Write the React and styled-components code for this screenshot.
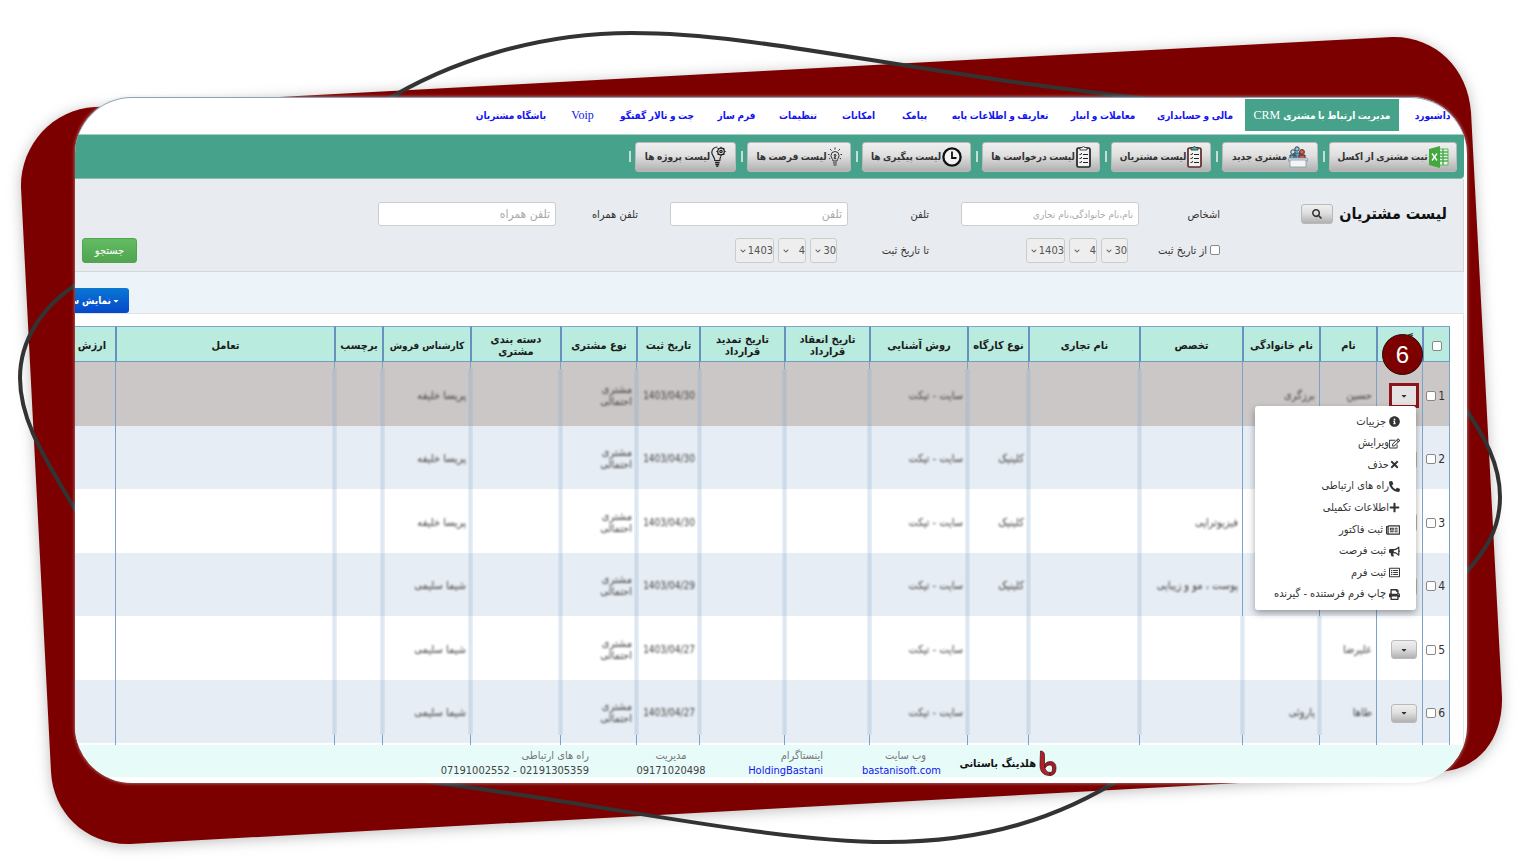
import React from "react";
import styled, { createGlobalStyle, css } from "styled-components";
import {
  FaInfoCircle,
  FaRegEdit,
  FaTimes,
  FaPhoneAlt,
  FaPlus,
  FaRegNewspaper,
  FaBullhorn,
  FaRegListAlt,
  FaPrint,
  FaSearch,
  FaCaretDown,
  FaChevronDown,
} from "react-icons/fa";

const ui = `"DejaVu Sans Condensed", "DejaVu Sans", sans-serif`;
const naskh = `"Liberation Serif", "DejaVu Sans Condensed", "DejaVu Sans", serif`;

const GlobalStyle = createGlobalStyle`
  *, *::before, *::after { box-sizing: border-box; }
  body { margin: 0; background: #fff; font-family: ${ui}; font-size: 11px; color: #333; }
  button, input, select { font: inherit; margin: 0; }
  a { text-decoration: none; }
`;

/* ---------- page and backdrop ---------- */

const Stage = styled.div`
  position: relative;
  min-height: 100vh;
  padding: 97px 69px 81px 75px;
  overflow: hidden;
`;

const Backdrop = styled.svg`
  position: absolute;
  inset: 0;
  width: 100%;
  height: 100%;
`;

const RedShape = styled.path`
  fill: #7d0000;
  filter: drop-shadow(0 2px 7px rgba(0, 0, 0, 0.26));
`;

const Swoosh = styled.path`
  fill: none;
  stroke: #333;
  stroke-width: 4;
`;

const Panel = styled.main`
  position: relative;
  direction: rtl;
  background: #fff;
  border-radius: 57px;
  overflow: hidden;
  box-shadow: 0 0 3px 1px rgba(228, 220, 220, 0.4), inset 0 1px 0 #8aa2bb;
`;

/* ---------- top navigation ---------- */

const Nav = styled.nav`
  display: flex;
  gap: 4px;
  height: 37px;
  padding: 2px 5px 3px 0;
`;

const NavLink = styled.a`
  display: flex;
  align-items: center;
  justify-content: center;
  flex: 0 0 auto;
  width: ${(p) => p.$width + 24}px;
  white-space: nowrap;
  font-family: ${naskh};
  font-size: ${(p) => (p.$latin ? 12 : 10)}px;
  font-weight: ${(p) => (p.$latin ? 400 : 700)};
  color: ${(p) => (p.$active ? "#fff" : "#1414f0")};
  background: ${(p) => (p.$active ? "#46a28b" : "transparent")};
`;

const Latin = styled.span`
  font-size: 12px;
  font-weight: 400;
`;

/* ---------- toolbar ---------- */

const Toolbar = styled.div`
  display: flex;
  align-items: center;
  height: 45px;
  margin-right: 3px;
  padding-right: 7px;
  background: #46a28b;
  border-top: 1px solid #a9cfc5;
  border-bottom: 1px solid #8fb9ae;
  border-radius: 0 0 4px 0;
`;

const greyButton = css`
  border: 1px solid #b9b9b9;
  border-radius: 3px;
  background: linear-gradient(#efefef, #e0dfdf 45%, #b2b1b1);
  color: #333;
  cursor: pointer;
`;

const ToolButton = styled.button`
  ${greyButton}
  display: flex;
  align-items: center;
  justify-content: center;
  gap: 1px;
  flex: 0 0 auto;
  width: ${(p) => p.$width}px;
  height: 30px;
  padding: 0;
  white-space: nowrap;
  font-family: ${naskh};
  font-size: 10px;
  font-weight: 700;
  svg {
    flex: 0 0 auto;
  }
`;

const Divider = styled.span`
  flex: 0 0 2px;
  height: 11px;
  margin: 0 4px 0 5px;
  background: #c4dfd8;
`;

/* ---------- filter form ---------- */

const Filters = styled.form`
  display: grid;
  grid-template-columns: 227px 81px 178px 32px 81px 178px 32px 82px 178px 1fr;
  grid-template-rows: 24px 26px;
  row-gap: 11px;
  align-items: center;
  height: 93px;
  margin-right: 3px;
  padding: 23px 16px 0 7px;
  background: #e8ecf0;
  border-right: 1px solid #d3d8dc;
  border-bottom: 1px solid #d3d8dc;
  align-content: start;
`;

const TitleCell = styled.div`
  display: flex;
  align-items: center;
  gap: 6px;
`;

const Title = styled.h1`
  margin: 0;
  font-size: 16px;
  line-height: 20px;
  font-weight: 700;
  color: #111;
  white-space: nowrap;
`;

const SearchToggle = styled.button`
  ${greyButton}
  display: grid;
  place-items: center;
  width: 32px;
  height: 20px;
  padding: 0;
  font-size: 10px;
`;

const FieldLabel = styled.label`
  grid-column: ${(p) => p.$col};
  display: flex;
  align-items: center;
  gap: 3px;
  white-space: nowrap;
`;

const TextInput = styled.input`
  grid-column: ${(p) => p.$col};
  width: 100%;
  height: 24px;
  padding: 0 5px;
  border: 1px solid #ccc;
  border-radius: 3px;
  background: #fff;
  font-size: ${(p) => (p.$small ? 10 : 12)}px;
  &::placeholder {
    color: #aaa;
    opacity: 1;
  }
`;

const DateGroup = styled.div`
  grid-column: ${(p) => p.$col};
  display: flex;
  gap: 4px;
  padding-right: 11px;
`;

const SelectBox = styled.span`
  position: relative;
  width: ${(p) => p.$width}px;
  height: 25px;
  svg {
    position: absolute;
    left: 5px;
    top: 10px;
    font-size: 6px;
    color: #666;
    pointer-events: none;
  }
`;

const Select = styled.select`
  appearance: none;
  width: 100%;
  height: 100%;
  padding: 0;
  border: 1px solid #ccc;
  border-radius: 3px;
  background: #eee;
  color: #555;
  font-size: 11px;
`;

const SubmitCell = styled.div`
  grid-column: 10;
  display: flex;
  justify-content: flex-end;
`;

const SubmitButton = styled.button`
  width: 55px;
  height: 25px;
  padding: 0;
  border: 1px solid #51a351;
  border-radius: 3px;
  background: linear-gradient(#62bb62, #51a551);
  color: #fff;
  cursor: pointer;
`;

const ActionBar = styled.div`
  display: flex;
  justify-content: flex-end;
  height: 42px;
  padding-top: 16px;
  margin-right: 3px;
  background: #ecf4f9;
  border-bottom: 1px solid #dde3e7;
`;

const ColumnsButton = styled.button`
  display: flex;
  align-items: center;
  gap: 1px;
  height: 25px;
  width: 102px;
  margin-left: -48px;
  padding: 0 9px;
  border: 0;
  border-radius: 3px;
  background: linear-gradient(#0a78d2, #0448cc);
  color: #fff;
  font-weight: 700;
  font-size: 10px;
  white-space: nowrap;
  cursor: pointer;
  svg {
    font-size: 8px;
  }
`;

/* ---------- customer table ---------- */

const TableCard = styled.section`
  margin-right: 3px;
  padding: 12px 13px 0 0;
  border-right: 1px solid #e4e8ec;
`;

const Table = styled.table`
  table-layout: fixed;
  width: calc(100% + 8px);
  border-collapse: separate;
  border-spacing: 0;
`;

const HeadCell = styled.th`
  height: 36px;
  padding: 4px 4px 0;
  background: #b9ebde;
  border-top: 1px solid #7ea6cc;
  border-bottom: 1px solid #6f9cc4;
  border-left: 2px solid #6790bd;
  color: #1c1c1c;
  font-size: ${(p) => (p.$tight ? 10 : 11)}px;
  white-space: ${(p) => (p.$tight ? "nowrap" : "normal")};
  line-height: 12px;
  &:first-child {
    border-right: 1px solid #6790bd;
  }
`;

const rowTint = (index) => {
  if (index === 0) return "#cbc7c6";
  return index % 2 ? "#e7edf4" : "#fff";
};

const Row = styled.tr`
  height: ${(p) => (p.$index % 2 ? 63 : 64)}px;
  background: ${(p) => rowTint(p.$index)};
`;

const sharpLine = css`
  content: "";
  position: absolute;
  left: 0;
  width: 1px;
  background: #7ba3c8;
`;

const Cell = styled.td`
  position: relative;
  padding: 3px 4px 0;
  text-align: right;
  line-height: 12px;
  &::after {
    ${sharpLine}
    top: 0;
    bottom: 0;
    ${(p) => p.$soft && "display: none;"}
    ${(p) => p.$soft && p.$first && "display: block; bottom: auto; height: 7px;"}
    ${(p) => p.$soft && p.$last && "display: block; top: auto; height: 8px;"}
  }
  ${(p) =>
    p.$soft &&
    css`
      &::before {
        content: "";
        position: absolute;
        left: -2px;
        width: 5px;
        top: ${p.$first ? 7 : 0}px;
        bottom: ${p.$last ? 8 : 0}px;
        background: linear-gradient(
          to right,
          rgba(123, 163, 200, 0.14),
          rgba(123, 163, 200, 0.28),
          rgba(123, 163, 200, 0.14)
        );
      }
    `}
  &:first-child {
    border-right: 1px solid #7ba3c8;
  }
`;

const TailCell = styled.td`
  height: 2px;
  padding: 0;
  border-left: 1px solid #7ba3c8;
  &:first-child {
    border-right: 1px solid #7ba3c8;
  }
`;

const Masked = styled.span`
  display: block;
  filter: blur(1px);
  color: #444;
  font-size: ${(p) => (p.$small ? 10 : 11)}px;
  white-space: pre;
`;

const Tick = styled.input`
  width: 10px;
  height: 10px;
  appearance: none;
  flex: 0 0 auto;
  border: 1px solid #888;
  border-radius: 2px;
  background: #fff;
  vertical-align: middle;
`;

const RowPick = styled.label`
  display: flex;
  align-items: center;
  gap: 2px;
  font-size: 12px;
`;

const ActionCell = styled(Cell)`
  padding: 3px 5px 0;
`;

const MenuButton = styled.button`
  ${greyButton}
  display: grid;
  place-items: center;
  width: 26px;
  height: 19px;
  padding: 0;
  font-size: 8px;
`;

const Highlight = styled.div`
  width: 30px;
  margin-right: -2px;
  border: 3px solid #8a141a;
  ${MenuButton} {
    width: 24px;
    border: 0;
    border-radius: 0;
    background: #e4e2e2;
  }
`;

const StepBadge = styled.span`
  position: absolute;
  z-index: 5;
  top: -28px;
  right: -1px;
  display: grid;
  place-items: center;
  width: 41px;
  height: 41px;
  border: 1px solid #2b0b0b;
  border-radius: 50%;
  background: #7d0000;
  color: #fff;
  font-family: "Liberation Sans", sans-serif;
  font-size: 24px;
`;

const Menu = styled.ul`
  position: absolute;
  z-index: 4;
  top: 44px;
  right: 6px;
  display: grid;
  grid-auto-rows: 1fr;
  width: 161px;
  height: 204px;
  margin: 0;
  padding: 5px 16px;
  list-style: none;
  background: #fff;
  border-radius: 3px;
  box-shadow: 0 3px 7px rgba(0, 0, 0, 0.35);
`;

const MenuLink = styled.a`
  display: flex;
  align-items: center;
  gap: ${(p) => (p.$tight ? 0 : 3)}px;
  height: 100%;
  color: #333;
  white-space: nowrap;
  svg {
    font-size: ${(p) => (p.$wide ? 14 : 11)}px;
    flex: 0 0 auto;
  }
`;

/* ---------- footer ---------- */

const Footer = styled.footer`
  display: flex;
  align-items: center;
  height: 32px;
  margin-bottom: 6px;
  padding: 4px 410px 0 0;
  background: #e7fbf9;
`;

const Brand = styled.div`
  display: flex;
  align-items: center;
  gap: 3px;
  flex: 0 0 99px;
  color: #111;
  font-size: 11px;
  font-weight: 700;
  white-space: nowrap;
`;

const Contacts = styled.dl`
  display: grid;
  grid-template-columns: 71px 70px 70px 148px;
  column-gap: 47px;
  margin: 0 17px 0 0;
`;

const Contact = styled.div`
  text-align: ${(p) => (p.$centered ? "center" : "right")};
  line-height: 15px;
  white-space: nowrap;
  dt {
    color: #777;
  }
  dd {
    margin: 0;
    color: #444;
  }
  bdi {
    direction: ltr;
  }
  a {
    color: #1414f0;
  }
`;

/* ---------- drawings ---------- */

const ExcelIcon = () => (
  <svg width="20" height="22" viewBox="0 0 20 22" aria-hidden="true">
    <path d="M10 3h9v16h-9z" fill="#e9f5e6" stroke="#5cb954" />
    <path d="M11 6h8M11 9h8M11 12h8M11 15h8M14 3v16" stroke="#4caf50" strokeWidth="1.500" />
    <path d="M0 3l11-3v22L0 19z" fill="#43a83f" />
    <path d="M3 7.500l5 7M8 7.500l-5 7" stroke="#fff" strokeWidth="1.300" />
  </svg>
);

const PeopleBoxIcon = () => (
  <svg width="20" height="22" viewBox="0 0 20 22" aria-hidden="true">
    <circle cx="9" cy="3" r="2.200" fill="#8cc7de" stroke="#2d4350" />
    <circle cx="5" cy="6" r="2.200" fill="#d7e4ec" stroke="#2d4350" />
    <circle cx="14" cy="6" r="2.400" fill="#d96248" stroke="#472b2b" />
    <path d="M2 13V9h6v4zM6 13V7h6v6z" fill="#60a6c5" stroke="#2d4350" />
    <path d="M11 13V9h6v4z" fill="#ce5844" stroke="#472b2b" />
    <path d="M1 12h18l1 3H0z" fill="#d9e0e6" stroke="#7c8a96" strokeWidth=".7" />
    <path d="M2 14h16v7H2z" fill="#f3f6f8" stroke="#8a959f" strokeWidth=".8" />
  </svg>
);

const ClipboardIcon = ({ edge, clip }) => (
  <svg width="15" height="22" viewBox="0 0 15 22" aria-hidden="true">
    <rect x="1" y="2" width="13" height="19" rx="1.500" fill="#f2f2f2" stroke={edge} strokeWidth="1.700" />
    <path d="M4 4V1.500h2L7.500.5 9 1.500h2V4z" fill={clip} stroke="#222" strokeWidth=".8" />
    <path d="M3.500 8l1 1 1.200-2M3.500 12l1 1 1.200-2M3.500 16l1 1 1.200-2" fill="none" stroke="#222" />
    <path d="M7 8.500h5M7 12.500h5M7 16.500h5" stroke="#222" strokeWidth="1.200" />
  </svg>
);

const ClockIcon = () => (
  <svg width="20" height="22" viewBox="0 0 20 22" aria-hidden="true">
    <circle cx="10" cy="11" r="8.600" fill="#f3f3f3" stroke="#111" strokeWidth="2.300" />
    <path d="M10 5.500V12h4.500" fill="none" stroke="#111" strokeWidth="1.800" />
  </svg>
);

const BulbIcon = () => (
  <svg width="14" height="20" viewBox="0 0 14 20" aria-hidden="true" fill="none" stroke="#333">
    <path d="M5 14c0-2-2-3-2-5.500a4 4 0 018 0C11 11 9 12 9 14z" />
    <path d="M5 16h4M5.500 18h3M6 8.500c0-1.500 2-1.500 2 0S6 10 6 11s2 1 2 0M7 7v5" />
    <path d="M7 .5v2M2 2l1.500 1.500M12 2l-1.500 1.500M0 7.500h1.500M12.500 7.500H14M1 12l1.200-.8M13 12l-1.200-.8" />
  </svg>
);

const BulbGearIcon = () => (
  <svg width="15" height="21" viewBox="0 0 15 21" aria-hidden="true" fill="none" stroke="#222" strokeWidth="1.200">
    <path d="M6.500 1C3 1 .8 3.500.8 6.500c0 3 3 4.500 3 8h5c0-2 .3-2.800 1-4" />
    <path d="M4 16.500h4.600M4.400 18.500h3.800M5.300 20.300h2" strokeWidth="1.500" />
    <circle cx="10" cy="5.500" r="3.300" strokeWidth="1.300" />
    <circle cx="10" cy="5.500" r="1.200" />
    <path d="M10 .8v1.400M10 8.800v1.400M5.300 5.500h1.400M13.300 5.500h1.400M6.700 2.200l1 1M12.300 7.800l1 1M13.300 2.200l-1 1M7.700 7.800l-1 1" />
  </svg>
);

const BrandMark = () => (
  <svg width="18" height="26" viewBox="0 0 18 26" aria-hidden="true">
    <path d="M1.500 1c2.800 0 4 1.800 4 4.500v9c0 4.500 1.500 7.500 5.500 8v3C4.500 25.500 1 22 1 15z" fill="#b3202a" stroke="#3a1114" strokeWidth=".7" />
    <path d="M5.500 14.500C7 12.500 9 11.500 11.500 11.500c3.500 0 5.500 2.500 5.500 6.500 0 4.500-2 7.500-6 7.500v-3c1.700 0 2.500-1.500 2.500-4 0-2.200-.8-3.500-2.500-3.500-2 0-3.500 1-5 3z" fill="#a51c26" stroke="#3a1114" strokeWidth=".7" />
  </svg>
);

/* ---------- data ---------- */

const navItems = [
  { text: "داشبورد", width: 35 },
  { text: "مدیریت ارتباط با مشتری", latin: "CRM", width: 130, active: true },
  { text: "مالی و حسابداری", width: 68 },
  { text: "معاملات و انبار", width: 60 },
  { text: "تعاریف و اطلاعات پایه", width: 90 },
  { text: "پیامک", width: 25 },
  { text: "امکانات", width: 31 },
  { text: "تنظیمات", width: 34 },
  { text: "فرم ساز", width: 33 },
  { text: "چت و تالار گفتگو", width: 70 },
  { text: "Voip", width: 23, isLatin: true },
  { text: "باشگاه مشتریان", width: 64 },
];

const tools = [
  { text: "ثبت مشتری از اکسل", width: 128, icon: <ExcelIcon /> },
  { text: "مشتری جدید", width: 96, icon: <PeopleBoxIcon /> },
  { text: "لیست مشتریان", width: 100, icon: <ClipboardIcon edge="#5a2c25" clip="#4fb3a0" /> },
  { text: "لیست درخواست ها", width: 118, icon: <ClipboardIcon edge="#222" clip="#eee" /> },
  { text: "لیست پیگیری ها", width: 109, icon: <ClockIcon /> },
  { text: "لیست فرصت ها", width: 104, icon: <BulbIcon /> },
  { text: "لیست پروژه ها", width: 101, icon: <BulbGearIcon /> },
];

const columns = [
  { key: "pick", width: 28 },
  { key: "actions", width: 46, title: "گزینه ها" },
  { key: "name", width: 57, title: "نام" },
  { key: "family", width: 77, title: "نام خانوادگی" },
  { key: "field", width: 103, title: "تخصص" },
  { key: "trade", width: 111, title: "نام تجاری" },
  { key: "workshop", width: 61, title: "نوع کارگاه" },
  { key: "source", width: 98, title: "روش آشنایی" },
  { key: "signed", width: 85, title: "تاریخ انعقاد قرارداد" },
  { key: "renewed", width: 85, title: "تاریخ تمدید قرارداد" },
  { key: "date", width: 63, title: "تاریخ ثبت" },
  { key: "kind", width: 76, title: "نوع مشتری" },
  { key: "group", width: 90, title: "دسته بندی مشتری" },
  { key: "seller", width: 88, title: "کارشناس فروش", tight: true },
  { key: "tag", width: 48, title: "برچسب" },
  { key: "talk", title: "تعامل" },
  { key: "value", width: 48, title: "ارزش" },
];

const common = { source: "سایت - تیکت", kind: "مشتری\nاحتمالی" };
const customers = [
  { ...common, name: "حسین", family: "برزگری", date: "1403/04/30", seller: "پریسا خلیفه" },
  { ...common, workshop: "کلینیک", date: "1403/04/30", seller: "پریسا خلیفه" },
  { ...common, workshop: "کلینیک", field: "فیزیوتراپی", date: "1403/04/30", seller: "پریسا خلیفه" },
  { ...common, workshop: "کلینیک", field: "پوست ، مو و زیبایی", date: "1403/04/29", seller: "شیما سلیمی" },
  { ...common, name: "علیرضا", date: "1403/04/27", seller: "شیما سلیمی" },
  { ...common, name: "طاها", family: "یاروئی", date: "1403/04/27", seller: "شیما سلیمی" },
];

const menuItems = [
  { text: "جزییات", icon: <FaInfoCircle /> },
  { text: "ویرایش", icon: <FaRegEdit />, tight: true },
  { text: "حذف", icon: <FaTimes />, tight: true },
  { text: "راه های ارتباطی", icon: <FaPhoneAlt />, tight: true },
  { text: "اطلاعات تکمیلی", icon: <FaPlus />, tight: true },
  { text: "ثبت فاکتور", icon: <FaRegNewspaper />, wide: true },
  { text: "ثبت فرصت", icon: <FaBullhorn /> },
  { text: "ثبت فرم", icon: <FaRegListAlt /> },
  { text: "چاپ فرم فرستنده - گیرنده", icon: <FaPrint /> },
];

const isSoft = (key, row) => {
  if (["pick", "actions", "talk", "value"].includes(key)) return false;
  return key === "name" || key === "family" ? row > 3 : true;
};

/* ---------- composed parts ---------- */

const DateSelects = ({ col, name, label }) => (
  <DateGroup $col={col} role="group" aria-label={label}>
    {[
      ["day", "30", 27],
      ["month", "4", 28],
      ["year", "1403", 39],
    ].map(([part, value, width]) => (
      <SelectBox key={part} $width={width}>
        <Select id={`${name}-${part}`} aria-label={`${label} ${value}`} defaultValue={value}>
          <option>{value}</option>
        </Select>
        <FaChevronDown />
      </SelectBox>
    ))}
  </DateGroup>
);

const CustomerRow = ({ customer, index }) => {
  const edges = { $first: index === 0, $last: index === customers.length - 1 };
  return (
    <Row $index={index}>
      {columns.map(({ key }) => {
        if (key === "pick") {
          return (
            <Cell key={key}>
              <RowPick>
                {index + 1}
                <Tick type="checkbox" />
              </RowPick>
            </Cell>
          );
        }
        if (key === "actions") {
          const button = (
            <MenuButton type="button" aria-label="گزینه ها">
              <FaCaretDown />
            </MenuButton>
          );
          return (
            <ActionCell key={key}>
              {index === 0 ? <Highlight>{button}</Highlight> : button}
              {index === 0 && (
                <>
                  <StepBadge>6</StepBadge>
                  <Menu>
                    {menuItems.map((item) => (
                      <li key={item.text}>
                        <MenuLink href="#" $tight={item.tight} $wide={item.wide}>
                          {item.icon}
                          {item.text}
                        </MenuLink>
                      </li>
                    ))}
                  </Menu>
                </>
              )}
            </ActionCell>
          );
        }
        return (
          <Cell key={key} $soft={isSoft(key, index)} {...edges}>
            {customer[key] && <Masked $small={key === "date"}>{customer[key]}</Masked>}
          </Cell>
        );
      })}
    </Row>
  );
};

export default function App() {
  return (
    <Stage>
      <GlobalStyle />
      <Backdrop viewBox="0 0 1536 864" preserveAspectRatio="none" aria-hidden="true">
        <RedShape d="M95 107L1392 37C1435 36 1468 68 1471 112L1502 697C1503 738 1480 770 1438 772L130 844C85 845 53 812 51 772L21 188C20 146 52 109 95 107z" />
        <Swoosh d="M380 104C450 60 540 33 632 33C760 33 900 72 1150 99" />
        <Swoosh d="M80 282C40 307 20 342 20 378C20 425 50 465 80 518" />
        <Swoosh d="M1462 404C1485 436 1500 465 1500 497C1500 530 1485 552 1462 577" />
        <Swoosh d="M380 776C560 795 760 842 887 842C985 842 1060 818 1125 776" />
      </Backdrop>

      <Panel>
        <Nav>
          {navItems.map((item) => (
            <NavLink key={item.text} href="#" $width={item.width} $active={item.active} $latin={item.isLatin}>
              <span>
                {item.text}
                {item.latin && <Latin> {item.latin}</Latin>}
              </span>
            </NavLink>
          ))}
        </Nav>

        <Toolbar>
          {tools.map((tool) => (
            <React.Fragment key={tool.text}>
              <ToolButton type="button" $width={tool.width}>
                {tool.icon}
                {tool.text}
              </ToolButton>
              <Divider />
            </React.Fragment>
          ))}
        </Toolbar>

        <Filters onSubmit={(e) => e.preventDefault()}>
          <TitleCell>
            <Title>لیست مشتریان</Title>
            <SearchToggle type="button" aria-label="جستجو">
              <FaSearch />
            </SearchToggle>
          </TitleCell>
          <FieldLabel htmlFor="person" $col={2}>اشخاص</FieldLabel>
          <TextInput id="person" $col={3} $small placeholder="نام،نام خانوادگی،نام تجاری" />
          <FieldLabel htmlFor="phone" $col={5}>تلفن</FieldLabel>
          <TextInput id="phone" $col={6} placeholder="تلفن" />
          <FieldLabel htmlFor="mobile" $col={8}>تلفن همراه</FieldLabel>
          <TextInput id="mobile" $col={9} placeholder="تلفن همراه" />

          <FieldLabel $col={2}>
            <Tick type="checkbox" />
            از تاریخ ثبت
          </FieldLabel>
          <DateSelects col={3} name="from" label="از تاریخ ثبت" />
          <FieldLabel htmlFor="to-day" $col={5}>تا تاریخ ثبت</FieldLabel>
          <DateSelects col={6} name="to" label="تا تاریخ ثبت" />
          <SubmitCell>
            <SubmitButton type="submit">جستجو</SubmitButton>
          </SubmitCell>
        </Filters>

        <ActionBar>
          <ColumnsButton type="button">
            <FaCaretDown />
            نمایش ستون ها
          </ColumnsButton>
        </ActionBar>

        <TableCard>
          <Table>
            <colgroup>
              {columns.map((c) => (
                <col key={c.key} width={c.width} />
              ))}
            </colgroup>
            <thead>
              <tr>
                {columns.map((c) => (
                  <HeadCell key={c.key} scope="col" $tight={c.tight}>
                    {c.key === "pick" ? <Tick type="checkbox" aria-label="انتخاب همه" /> : c.title}
                  </HeadCell>
                ))}
              </tr>
            </thead>
            <tbody>
              {customers.map((customer, index) => (
                <CustomerRow key={index} customer={customer} index={index} />
              ))}
              <tr>
                {columns.map((c) => (
                  <TailCell key={c.key} />
                ))}
              </tr>
            </tbody>
          </Table>
        </TableCard>

        <Footer>
          <Brand>
            <BrandMark />
            هلدینگ باستانی
          </Brand>
          <Contacts>
            <Contact $centered>
              <dt>وب سایت</dt>
              <dd><a href="#">bastanisoft.com</a></dd>
            </Contact>
            <Contact>
              <dt>اینستاگرام</dt>
              <dd><a href="#">HoldingBastani</a></dd>
            </Contact>
            <Contact $centered>
              <dt>مدیریت</dt>
              <dd>09171020498</dd>
            </Contact>
            <Contact>
              <dt>راه های ارتباطی</dt>
              <dd><bdi dir="ltr">07191002552 - 02191305359</bdi></dd>
            </Contact>
          </Contacts>
        </Footer>
      </Panel>
    </Stage>
  );
}
